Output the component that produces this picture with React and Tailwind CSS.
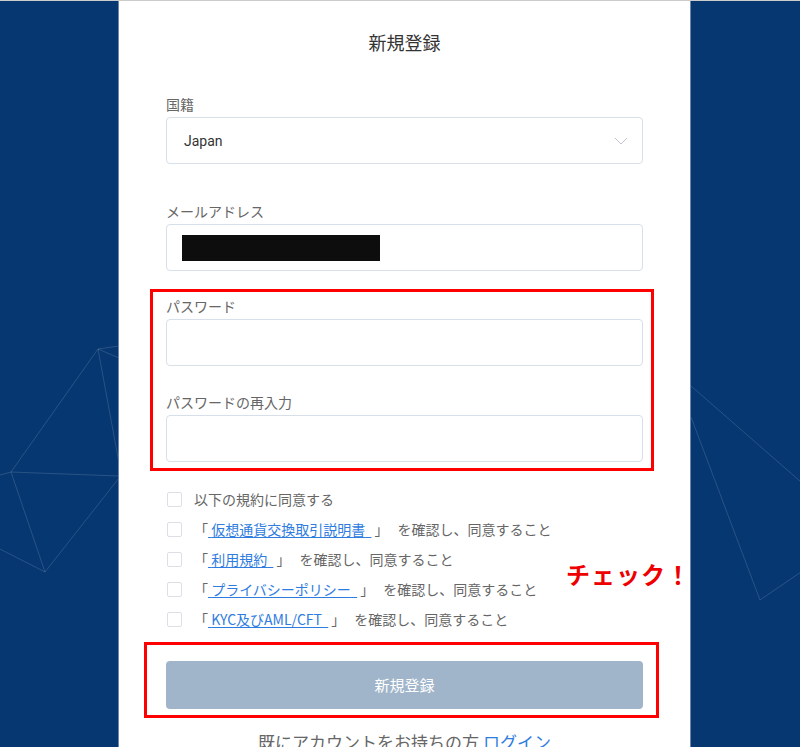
import { useState } from "react";

const font = { fontFamily: '"Noto Sans CJK JP", Roboto, "Noto Sans", sans-serif' };

const leftLines = [
  [98, 349, 119, 346],
  [98, 349, 119, 358],
  [98, 349, 119, 463],
  [98, 349, 11, 472],
  [11, 472, 119, 476],
  [11, 472, 0, 475],
  [11, 472, 45, 572],
  [45, 572, 0, 549],
  [45, 572, 119, 478],
];

const rightLines = [
  [0, 386, 110, 482],
  [0, 417, 69, 600],
  [69, 600, 110, 572],
];

const BgLines = ({ lines }) => (
  <svg className="absolute inset-0 w-full h-full" preserveAspectRatio="none">
    {lines.map(([x1, y1, x2, y2], i) => (
      <line
        key={i}
        x1={x1}
        y1={y1}
        x2={x2}
        y2={y2}
        stroke="#ffffff"
        strokeOpacity="0.14"
        strokeWidth="1"
      />
    ))}
  </svg>
);

const Field = ({ label, className = "", children }) => (
  <div className={className}>
    <div className="text-sm leading-5 text-[#666]">{label}</div>
    <div className="mt-[3px] h-[47px] rounded-[4px] border border-[#d7dfe8] bg-white flex items-center px-[17px]">
      {children}
    </div>
  </div>
);

const Check = ({ children }) => {
  const [on, setOn] = useState(false);
  return (
    <label className="h-[30px] flex items-center cursor-pointer">
      <span
        onClick={() => setOn(!on)}
        className={`ml-px w-[15px] h-[15px] rounded-[2px] border ${
          on ? "border-[#2e7ce0] bg-[#2e7ce0]" : "border-[#dcdfe6] bg-white"
        }`}
      />
      <span className="ml-3 text-sm leading-5 text-[#666]">{children}</span>
    </label>
  );
};

const Term = ({ name }) => (
  <>
    「<a href="#" className="text-[#2e7ce0] underline underline-offset-2">
      &nbsp;{name}&nbsp;&nbsp;
    </a>
    <span className="ml-[3px]">」</span>
    <span className="ml-[9px]">を確認し、同意すること</span>
  </>
);

export default function App() {
  return (
    <div className="min-h-screen bg-white" style={font}>
      <div className="h-px bg-[#cbcbcb]" />
      <div className="flex min-h-[746px]">
        <div className="relative w-[119px] shrink-0 bg-[#063771] border-r border-[#6c86ad]">
          <BgLines lines={leftLines.map(([a, b, c, d]) => [a, b - 1, c, d - 1])} />
        </div>

        <div className="w-[571px] shrink-0 bg-white">
          <div className="mx-[47px]">
            <h1 className="mt-[29px] text-center text-[18px] leading-6 text-[#333]">
              新規登録
            </h1>

            <Field label="国籍" className="mt-[40px]">
              <span className="flex-1 text-sm text-[#333]" style={{ fontFamily: 'Roboto, "Noto Sans CJK JP", sans-serif' }}>
                Japan
              </span>
              <svg width="14" height="8" viewBox="0 0 14 8" className="mr-[-3px]">
                <polyline points="1,1 7,7 13,1" fill="none" stroke="#c0c4cc" strokeWidth="1" />
              </svg>
            </Field>

            <Field label="メールアドレス" className="mt-[37px]">
              <span className="-ml-[2px] w-[198px] h-[26px] bg-[#0d0d0d]" />
            </Field>

            <div className="mt-[18px] -ml-[16px] -mr-[11px] border-[3px] border-[#ff0000] pl-[13px] pr-[8px] pt-[4px] pb-[6px]">
              <Field label="パスワード" />
              <Field label="パスワードの再入力" className="mt-[26px]" />
            </div>

            <div className="relative mt-[13px]">
              <Check>以下の規約に同意する</Check>
              <Check>
                <Term name="仮想通貨交換取引説明書" />
              </Check>
              <Check>
                <Term name="利用規約" />
              </Check>
              <Check>
                <Term name="プライバシーポリシー" />
              </Check>
              <Check>
                <Term name="KYC及びAML/CFT" />
              </Check>
              <div className="absolute left-[400px] top-[74px] text-[24px] leading-8 tracking-[1px] font-bold text-[#ee0000] whitespace-nowrap">
                チェック！
              </div>
            </div>

            <div className="mt-[8px] -ml-[22px] -mr-[16px] border-[3px] border-[#ff0000] pl-[19px] pr-[13px] pt-[16px] pb-[6px]">
              <button className="w-full h-[48px] rounded-[4px] bg-[#a0b5ca] text-white text-[15px]">
                新規登録
              </button>
            </div>

            <p className="mt-[12px] text-center text-[17px] leading-6 text-[#666]">
              既にアカウントをお持ちの方 <a href="#" className="text-[#2e7ce0]">ログイン</a>
            </p>
          </div>
        </div>

        <div className="relative flex-1 bg-[#063771] border-l border-[#6c86ad]">
          <BgLines lines={rightLines.map(([a, b, c, d]) => [a, b - 1, c, d - 1])} />
        </div>
      </div>
    </div>
  );
}
